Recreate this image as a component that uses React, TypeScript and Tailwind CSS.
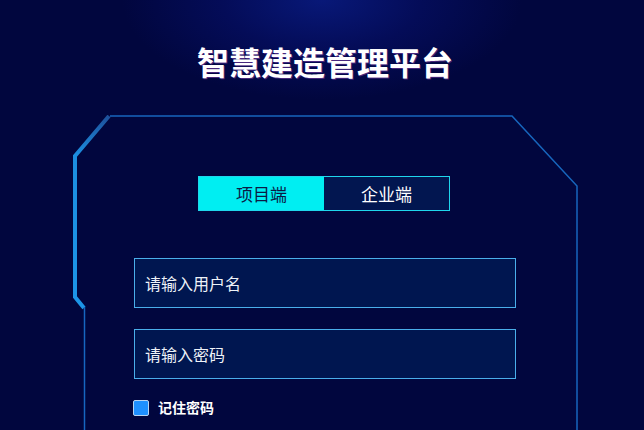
import { useState } from 'react';

const cjk = { fontFamily: '"Noto Sans CJK SC", "Noto Sans", sans-serif' };

function Frame() {
  return (
    <svg className="absolute inset-0 pointer-events-none" width="505" height="315" viewBox="0 0 505 315">
      <defs>
        <linearGradient id="edge" x1="0" y1="0" x2="0" y2="1">
          <stop offset="0" stopColor="#1d4f9a" />
          <stop offset="0.2" stopColor="#1c8ee0" />
          <stop offset="1" stopColor="#1c95e8" />
        </linearGradient>
      </defs>
      <polyline points="37,1 439,1 504,71 504,315" fill="none" stroke="#1766bd" strokeWidth="1.5" />
      <polyline points="36,1 2,41 2,182 11,193" fill="none" stroke="url(#edge)" strokeWidth="4" />
      <line x1="11.5" y1="192" x2="11.5" y2="315" stroke="#1766c0" strokeWidth="1.5" />
    </svg>
  );
}

export default function App() {
  const [tab, setTab] = useState(0);
  const [remember, setRemember] = useState(true);

  return (
    <div
      className="w-[644px] h-[430px] overflow-hidden bg-[#01063e] bg-[radial-gradient(ellipse_200px_100px_at_322px_0px,#081878,#040c58_50%,transparent)]"
      style={cjk}
    >
      <h1 className="pt-[39px] pl-[6px] h-[115px] text-center text-[32px] leading-[44px] font-bold text-white [text-shadow:1px_1px_0_rgba(120,60,160,0.6)]">
        智慧建造管理平台
      </h1>

      <div className="relative ml-[73px] w-[505px] h-[315px]">
        <Frame />
        <div className="relative flex flex-col items-center pt-[61px]">
          <div className="flex ml-[-3px] w-[252px] h-[35px] border border-[#1fd6ec]">
            {['项目端', '企业端'].map((label, i) => (
              <button
                key={label}
                onClick={() => setTab(i)}
                className={`flex-1 flex items-center justify-center text-[17px] ${
                  tab === i ? 'bg-[#00eef2] text-[#0b1a45]' : 'bg-[#021650] text-white'
                }`}
              >
                {label}
              </button>
            ))}
          </div>

          <div className="mt-[47px] ml-[-1px] flex flex-col gap-[21px] w-[382px]">
            <input
              placeholder="请输入用户名"
              className="h-[50px] px-[10px] bg-[#001650] border border-[#4aaeea] text-[16px] text-white placeholder:text-[#eef2f8] outline-none"
            />
            <input
              type="password"
              placeholder="请输入密码"
              className="h-[50px] px-[10px] bg-[#001650] border border-[#4aaeea] text-[16px] text-white placeholder:text-[#eef2f8] outline-none"
            />
          </div>

          <label className="self-start ml-[60px] mt-[18px] flex items-center gap-[9px] cursor-pointer">
            <span
              onClick={() => setRemember(!remember)}
              className={`w-[16px] h-[16px] rounded-[2px] border border-[#b8d4f0] ${
                remember ? 'bg-[#1e90ff]' : 'bg-transparent'
              }`}
            />
            <span className="text-[14px] font-bold text-white">记住密码</span>
          </label>
        </div>
      </div>
    </div>
  );
}
